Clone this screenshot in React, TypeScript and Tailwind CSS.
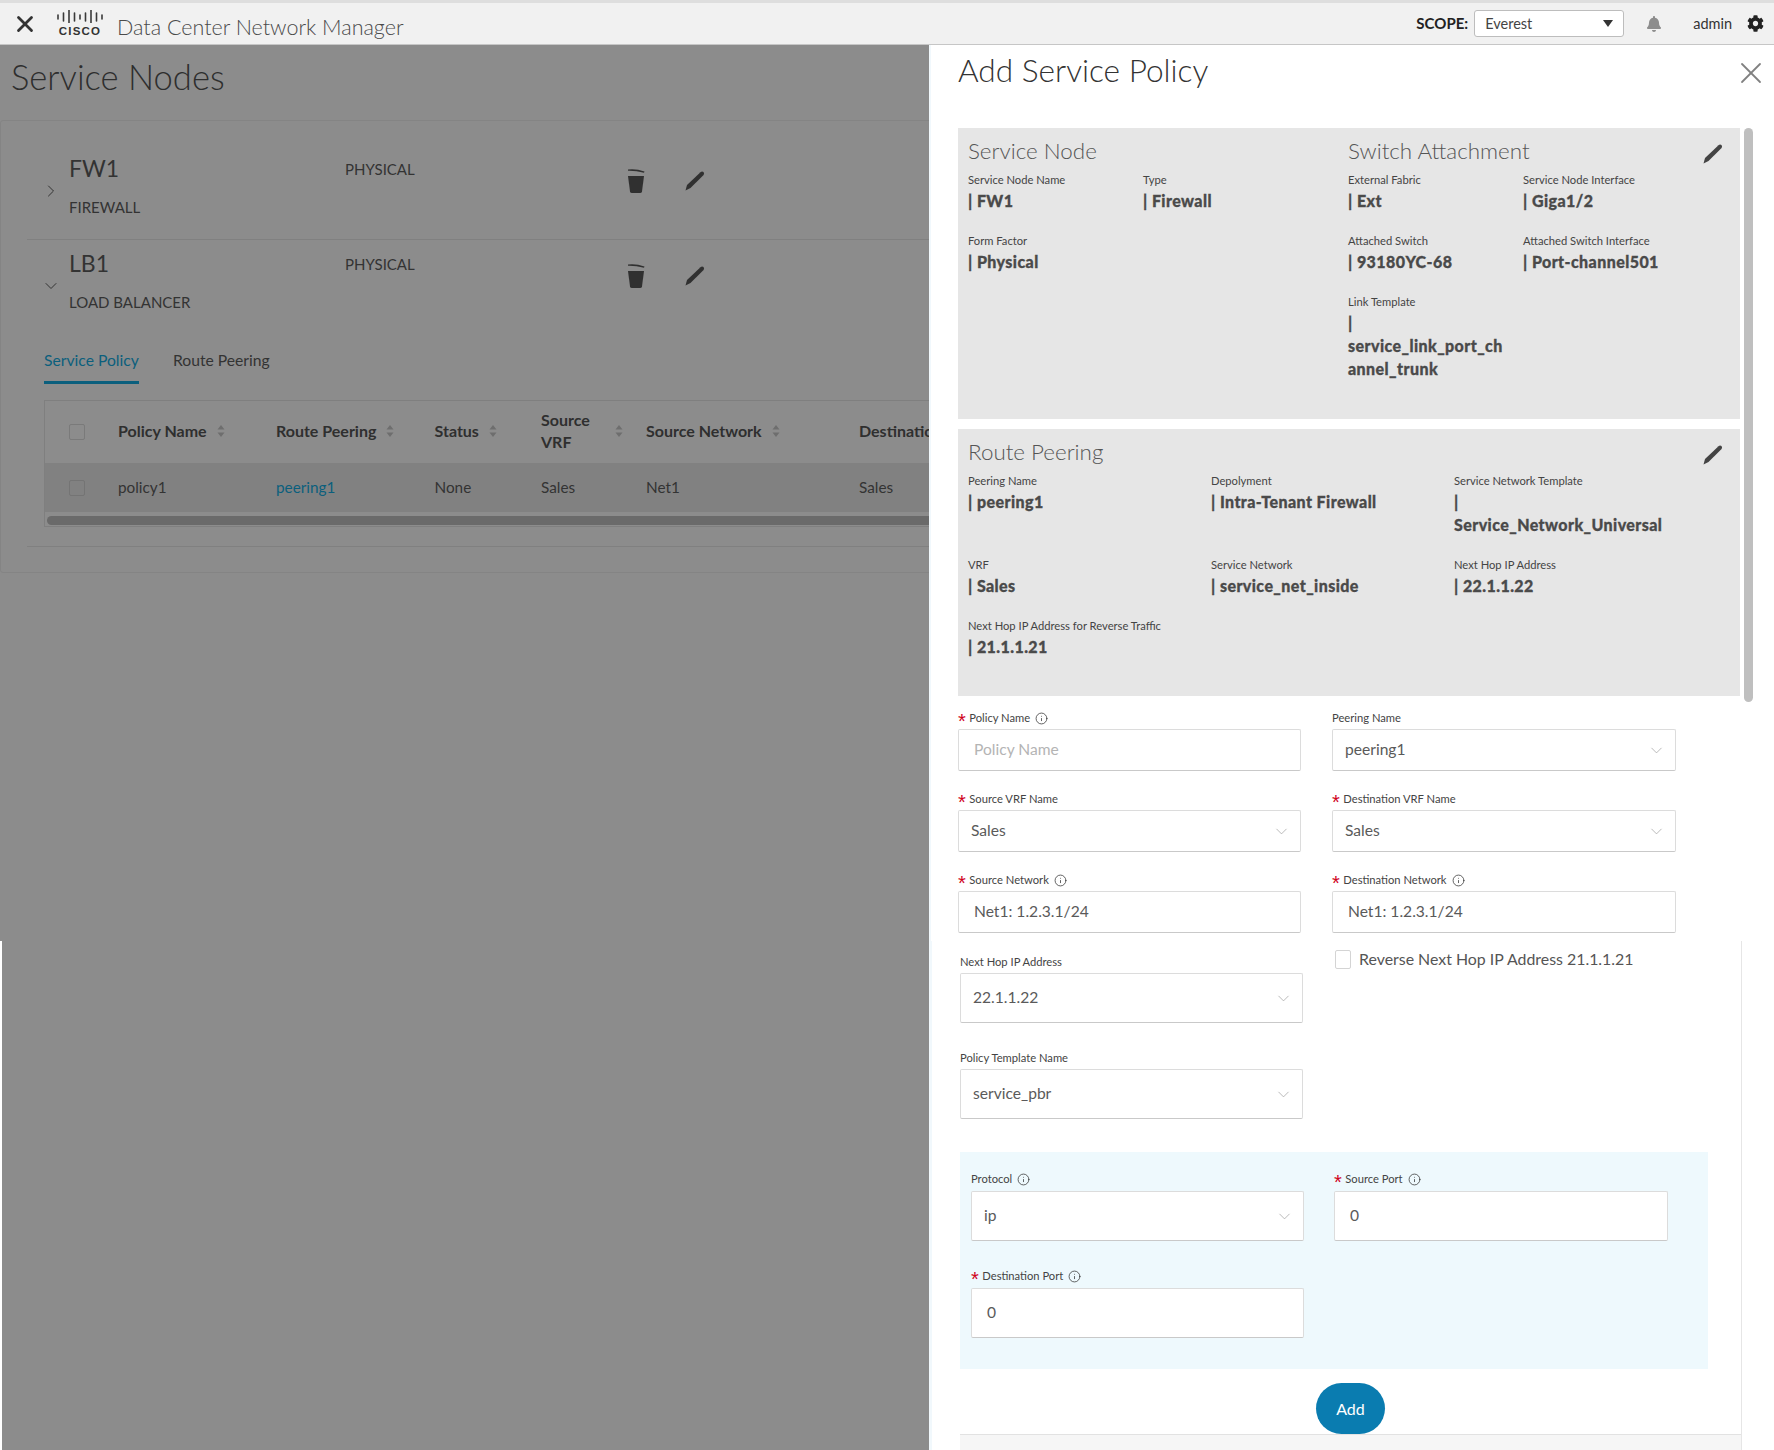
import React from "react";
import { ChevronDown, ChevronRight, Info, X } from "lucide-react";
import { FaBell, FaCog } from "react-icons/fa";

const Pencil = ({ color = "#333" }: { color?: string }) => (
  <svg width="22" height="22" viewBox="0 0 22 22" className="shrink-0">
    <path d="M1.5 20.5 L3 15 L16.5 2.2 Q18 1 19.5 2 Q20.6 3.4 19.6 5 L6.5 18 Z" fill={color} />
  </svg>
);

const Trash = () => (
  <svg width="20" height="26" viewBox="0 0 20 26" className="shrink-0">
    <path d="M2 1.5 Q10 0.5 18.5 3.5 L18 4.8 Q10 2.6 2 2.8 Z" fill="#303030" />
    <path d="M2 8 H18 L16 23.5 Q15.8 25 14 25 H6 Q4.2 25 4 23.5 Z" fill="#303030" />
  </svg>
);

const Sort = () => (
  <svg width="8" height="14" viewBox="0 0 8 14" className="shrink-0">
    <path d="M4 1 L7.5 5.5 H0.5 Z" fill="#6e6e6e" />
    <path d="M4 13 L7.5 8.5 H0.5 Z" fill="#6e6e6e" />
  </svg>
);

const CiscoLogo = () => (
  <div className="flex w-[46px] flex-col items-center">
    <svg width="46" height="13" viewBox="0 0 46 13">
      {[
        [1, 5, 9],
        [6.5, 3, 11],
        [12, 0, 13],
        [17.5, 3, 11],
        [23, 5, 9],
        [28.5, 3, 11],
        [34, 0, 13],
        [39.5, 3, 11],
        [45, 5, 9],
      ].map(([x, y1, y2]) => (
        <line key={x} x1={x} x2={x} y1={y1} y2={y2} stroke="#3a3a3a" strokeWidth="1.6" strokeLinecap="round" />
      ))}
    </svg>
    <span className="mt-[2px] font-['Liberation_Sans',sans-serif] text-[11.5px] leading-[12px] font-bold tracking-[1.2px] text-[#333]">
      CISCO
    </span>
  </div>
);

const Field = ({ label, lines, className = "" }: { label: string; lines: string[]; className?: string }) => (
  <div className={className}>
    <div className="text-[11.2px] leading-[18px] text-[#444]">{label}</div>
    {lines.map((l) => (
      <div
        key={l}
        className="text-[16px] leading-[23px] font-black tracking-[0.42px] whitespace-nowrap text-[#4a4a4a] [-webkit-text-stroke:0.3px_#4a4a4a]"
      >
        {l}
      </div>
    ))}
  </div>
);

const Req = () => (
  <span className="mt-[7px] mr-[3.5px] font-['Liberation_Sans',sans-serif] text-[20px] leading-[15px] text-[#d0021b]">*</span>
);

const Label = ({ text, req, info }: { text: string; req?: boolean; info?: boolean }) => (
  <div className="flex h-[18px] items-center pt-[2px] text-[11.2px] text-[#444]">
    {req && <Req />}
    <span>{text}</span>
    {info && <Info size={13} strokeWidth={1.4} className="ml-[5px] text-[#333]" />}
  </div>
);

const Box = ({
  value,
  select,
  placeholder,
  pad,
  h,
}: {
  value?: string;
  select?: boolean;
  placeholder?: string;
  pad: string;
  h: string;
}) => (
  <div
    className={`flex ${h} ${pad} items-center justify-between rounded-[2px] border border-[#dcdcdc] border-b-[#c9c9c9] bg-white pr-[9px] text-[15.6px] ${
      placeholder ? "text-[#b4b4b4]" : "text-[#5a5a5a]"
    }`}
  >
    <span>{placeholder ?? value}</span>
    {select && <ChevronDown size={19} strokeWidth={1} className="text-[#a8a8a8]" />}
  </div>
);

const NodeRow = ({ name, kind, open, border }: { name: string; kind: string; open?: boolean; border?: boolean }) => (
  <div className={`ml-[26px] flex h-[95px] text-[#333] ${border ? "border-b border-[#808080]" : ""}`}>
    <div className="w-[42px] pt-[36px] pl-[14px]">
      {open ? <ChevronDown size={20} strokeWidth={1.2} /> : <ChevronRight size={20} strokeWidth={1.2} />}
    </div>
    <div className="w-[276px] pt-[9px]">
      <div className="text-[23px] leading-[28px]">{name}</div>
      <div className="mt-[15px] text-[15px] leading-[20px]">{kind}</div>
    </div>
    <div className="w-[281px] pt-[13px] text-[15px] leading-[22px]">PHYSICAL</div>
    <div className="flex h-fit items-center gap-[38px] pt-[23px]">
      <Trash />
      <Pencil color="#303030" />
    </div>
  </div>
);

const Head = ({ children, sort = true }: { children: React.ReactNode; sort?: boolean }) => (
  <div className="flex items-center gap-[10px] pb-[2px] text-[16px] leading-[22px] font-bold whitespace-nowrap text-[#2f2f2f]">
    {children}
    {sort && <Sort />}
  </div>
);

const Check = ({ c = "border-[#7a7a7a]" }: { c?: string }) => (
  <div className={`h-[16px] w-[16px] rounded-[2px] border ${c}`} />
);

const colsTable = "grid grid-cols-[73px_158px_158.5px_106.5px_105px_213px_200px] items-center";

export default function App() {
  return (
    <div className="flex h-[1450px] w-[1774px] flex-col overflow-hidden bg-white font-['Lato',sans-serif]">
      {/* top bar */}
      <header className="flex h-[45px] shrink-0 items-center border-t-[3px] border-b border-t-[#dedede] border-b-[#c6c6c6] bg-[#f1f1f1]">
        <X size={26} strokeWidth={2.6} className="ml-[12px] text-[#333]" />
        <div className="ml-[19px]">
          <CiscoLogo />
        </div>
        <div className="mt-[7px] ml-[14px] text-[21.5px] font-light text-[#4a4a4a]">Data Center Network Manager</div>
        <div className="ml-auto text-[15px] font-bold text-[#222]">SCOPE:</div>
        <div className="ml-[6px] flex h-[27px] w-[150px] items-center justify-between rounded-[3px] border border-[#bdbdbd] bg-white pr-[10px] pl-[10px] text-[14.5px] text-[#444]">
          <span>Everest</span>
          <span className="h-0 w-0 border-x-[5px] border-t-[7px] border-x-transparent border-t-[#333]" />
        </div>
        <FaBell size={16} className="ml-[22px] text-[#8d8d8d]" />
        <div className="ml-[31px] text-[14.5px] text-[#333]">admin</div>
        <FaCog size={17} className="mr-[10px] ml-[15px] text-[#222]" />
      </header>

      <div className="flex min-h-0 flex-1">
        {/* dimmed page */}
        <div className="relative flex w-[929px] shrink-0 flex-col overflow-hidden bg-[#8c8c8c] text-[#333]">
          <div className="absolute top-[896px] bottom-0 left-0 w-[2px] bg-white" />
          <div className="flex h-[75px] shrink-0 items-center pb-[12px] pl-[11px] text-[34.6px] font-light text-[#2e2e2e]">
            Service Nodes
          </div>
          <div className="h-[453px] w-[960px] shrink-0 rounded-[3px] border border-[#848484] pt-[24px]">
            <NodeRow name="FW1" kind="FIREWALL" border />
            <NodeRow name="LB1" kind="LOAD BALANCER" open />
            <div className="ml-[43px] flex h-[49px] gap-[34px] text-[15.7px]">
              <div className="flex h-[49px] flex-col justify-center border-b-[3px] border-[#0b5f7d] pt-[6px] text-[#0b5f7d]">
                Service Policy
              </div>
              <div className="flex h-[49px] flex-col justify-center border-b-[3px] border-transparent pt-[6px] text-[#333]">
                Route Peering
              </div>
            </div>
            <div className="mt-[16px] ml-[43px] h-[127px] w-[960px] border border-[#7f7f7f]">
              <div className={`${colsTable} h-[62px]`}>
                <div className="pl-[24px]">
                  <Check />
                </div>
                <Head>Policy Name</Head>
                <Head>Route Peering</Head>
                <Head>Status</Head>
                <Head>
                  <span className="w-[64px] whitespace-normal">Source VRF</span>
                </Head>
                <Head>Source Network</Head>
                <Head sort={false}>Destination</Head>
              </div>
              <div className={`${colsTable} h-[49px] bg-[#818181] text-[15.3px] text-[#333]`}>
                <div className="pl-[24px]">
                  <Check c="border-[#747474]" />
                </div>
                <div>policy1</div>
                <div className="text-[#0b5f7d]">peering1</div>
                <div>None</div>
                <div>Sales</div>
                <div>Net1</div>
                <div>Sales</div>
              </div>
              <div className="mt-[4px] ml-[2px] h-[9px] rounded-full bg-[#6a6a6a]" />
            </div>
            <div className="mt-[19px] ml-[26px] border-t border-[#808080]" />
          </div>
        </div>

        {/* drawer */}
        <div className="flex min-w-0 flex-1 flex-col bg-white">
          {/* upper part */}
          <div className="flex h-[896px] shrink-0 flex-col overflow-hidden border-l-[2px] border-[#f1f8fc] pl-[27px]">
            <div className="flex h-[83px] shrink-0 items-start justify-between pt-[6px] pr-[5px]">
              <div className="text-[31.6px] leading-[38px] font-light text-[#333]">Add Service Policy</div>
              <X size={36} strokeWidth={1.2} className="mt-[4px] text-[#808080]" />
            </div>
            <div className="flex">
              <div className="w-[782px] shrink-0">
                <section className="relative h-[291px] bg-[#e6e6e6] pt-[8px] pl-[10px]">
                  <div className="absolute top-[15px] right-[16px]">
                    <Pencil color="#444" />
                  </div>
                  <div className="grid grid-cols-[380px_1fr]">
                    <div>
                      <div className="text-[22.4px] leading-[30px] font-light text-[#555]">Service Node</div>
                      <div className="mt-[5px] grid grid-cols-[175px_1fr] gap-y-[20px]">
                        <Field label="Service Node Name" lines={["| FW1"]} />
                        <Field label="Type" lines={["| Firewall"]} />
                        <Field label="Form Factor" lines={["| Physical"]} />
                      </div>
                    </div>
                    <div>
                      <div className="text-[22.4px] leading-[30px] font-light text-[#555]">Switch Attachment</div>
                      <div className="mt-[5px] grid grid-cols-[175px_1fr] gap-y-[20px]">
                        <Field label="External Fabric" lines={["| Ext"]} />
                        <Field label="Service Node Interface" lines={["| Giga1/2"]} />
                        <Field label="Attached Switch" lines={["| 93180YC-68"]} />
                        <Field label="Attached Switch Interface" lines={["| Port-channel501"]} />
                        <Field label="Link Template" lines={["|", "service_link_port_ch", "annel_trunk"]} />
                      </div>
                    </div>
                  </div>
                </section>
                <section className="relative mt-[10px] h-[267px] bg-[#e6e6e6] pt-[8px] pl-[10px]">
                  <div className="absolute top-[15px] right-[16px]">
                    <Pencil color="#444" />
                  </div>
                  <div className="text-[22.4px] leading-[30px] font-light text-[#555]">Route Peering</div>
                  <div className="mt-[5px] grid grid-cols-[243px_243px_1fr] gap-y-[20px]">
                    <Field label="Peering Name" lines={["| peering1"]} />
                    <Field label="Depolyment" lines={["| Intra-Tenant Firewall"]} />
                    <Field label="Service Network Template" lines={["|", "Service_Network_Universal"]} />
                    <Field label="VRF" lines={["| Sales"]} />
                    <Field label="Service Network" lines={["| service_net_inside"]} />
                    <Field label="Next Hop IP Address" lines={["| 22.1.1.22"]} />
                    <Field label="Next Hop IP Address for Reverse Traffic" lines={["| 21.1.1.21"]} />
                  </div>
                </section>
                <div className="mt-[12px] grid w-[718px] grid-cols-[343px_344px] gap-x-[31px] gap-y-[18px]">
                  <div>
                    <Label text="Policy Name" req info />
                    <div className="mt-[3px]">
                      <Box placeholder="Policy Name" h="h-[42px]" pad="pl-[15px]" />
                    </div>
                  </div>
                  <div>
                    <Label text="Peering Name" />
                    <div className="mt-[3px]">
                      <Box value="peering1" select h="h-[42px]" pad="pl-[12px]" />
                    </div>
                  </div>
                  <div>
                    <Label text="Source VRF Name" req />
                    <div className="mt-[3px]">
                      <Box value="Sales" select h="h-[42px]" pad="pl-[12px]" />
                    </div>
                  </div>
                  <div>
                    <Label text="Destination VRF Name" req />
                    <div className="mt-[3px]">
                      <Box value="Sales" select h="h-[42px]" pad="pl-[12px]" />
                    </div>
                  </div>
                  <div>
                    <Label text="Source Network" req info />
                    <div className="mt-[3px]">
                      <Box value="Net1: 1.2.3.1/24" h="h-[42px]" pad="pl-[15px]" />
                    </div>
                  </div>
                  <div>
                    <Label text="Destination Network" req info />
                    <div className="mt-[3px]">
                      <Box value="Net1: 1.2.3.1/24" h="h-[42px]" pad="pl-[15px]" />
                    </div>
                  </div>
                </div>
              </div>
              <div className="ml-[4px] h-[574px] w-[9px] shrink-0 rounded-full bg-[#bfbfbf]" />
            </div>
          </div>

          {/* lower part */}
          <div className="flex min-h-0 flex-1 flex-col border-l-[3px] border-[#f1f8fc] pl-[28px]">
            <div className="flex w-[782px] flex-1 flex-col border-r border-[#e6e6e6]">
              <div className="grid w-[718px] grid-cols-[343px_1fr] gap-x-[32px] pt-[11px]">
                <div>
                  <Label text="Next Hop IP Address" />
                  <div className="mt-[3px]">
                    <Box value="22.1.1.22" select h="h-[50px]" pad="pl-[12px]" />
                  </div>
                </div>
                <div className="-mt-[2px] flex items-start gap-[8px]">
                  <div className="h-[19px] w-[16px] rounded-[2px] border border-[#d4d4d4]" />
                  <div className="-mt-[2px] text-[15.9px] leading-[22px] text-[#555]">
                    Reverse Next Hop IP Address 21.1.1.21
                  </div>
                </div>
                <div className="mt-[25px]">
                  <Label text="Policy Template Name" />
                  <div className="mt-[3px]">
                    <Box value="service_pbr" select h="h-[50px]" pad="pl-[12px]" />
                  </div>
                </div>
              </div>
              <div className="mt-[33px] h-[217px] w-[748px] bg-[#eef9fd] pt-[17px] pl-[11px]">
                <div className="grid grid-cols-[333px_334px] gap-x-[30px] gap-y-[25px]">
                  <div>
                    <Label text="Protocol" info />
                    <div className="mt-[4px]">
                      <Box value="ip" select h="h-[50px]" pad="pl-[12px]" />
                    </div>
                  </div>
                  <div>
                    <Label text="Source Port" req info />
                    <div className="mt-[4px]">
                      <Box value="0" h="h-[50px]" pad="pl-[15px]" />
                    </div>
                  </div>
                  <div>
                    <Label text="Destination Port" req info />
                    <div className="mt-[4px]">
                      <Box value="0" h="h-[50px]" pad="pl-[15px]" />
                    </div>
                  </div>
                </div>
              </div>
              <div className="mt-[14px] flex justify-center">
                <button className="h-[51px] w-[69px] rounded-full bg-[#0a7cb0] text-[16px] text-white">Add</button>
              </div>
              <div className="flex-1 border-t border-[#e2e2e2] bg-[#f6f6f6]" />
            </div>
          </div>
        </div>
      </div>
    </div>
  );
}
